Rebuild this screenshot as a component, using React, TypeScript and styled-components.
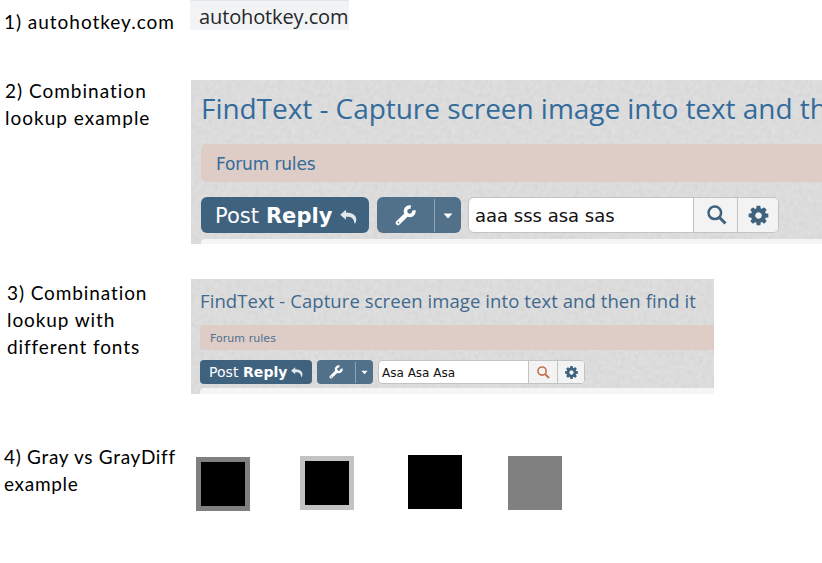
import React from "react";
import styled, { createGlobalStyle, css } from "styled-components";

const GlobalStyle = createGlobalStyle`
  * { box-sizing: border-box; }
  body { margin: 0; background: #fff; overflow: hidden; }
`;

const Page = styled.main`
  width: 822px;
  height: 563px;
  display: grid;
  grid-template-columns: 190px 632px;
  grid-template-rows: 80px 199px 176px 108px;
  overflow: hidden;
  color: #000;
`;

const Label = styled.p<{ $top: number; $left: number; $spacing: number }>`
  margin: ${(p) => p.$top}px 0 0 ${(p) => p.$left}px;
  font: 19px/27px Lato, sans-serif;
  letter-spacing: ${(p) => p.$spacing}px;
  white-space: pre;
`;

const AddressChip = styled.div`
  width: 159px;
  height: 30px;
  padding-left: 9px;
  background: #f1f3f4;
  border-top: 1px solid #e3e5e9;
  color: #26282b;
  font: 20px/32px "Open Sans", sans-serif;
  letter-spacing: -0.12px;
  white-space: nowrap;
  overflow: hidden;
`;

type Size = { $large: boolean };

const paper = `url("data:image/svg+xml,%3Csvg xmlns='http://www.w3.org/2000/svg' width='160' height='160'%3E%3Cfilter id='n'%3E%3CfeTurbulence type='fractalNoise' baseFrequency='0.22' numOctaves='2' stitchTiles='stitch'/%3E%3CfeColorMatrix values='0 0 0 0 0 0 0 0 0 0 0 0 0 0 0 0.07 0 0 0 -0.015'/%3E%3C/filter%3E%3Crect width='160' height='160' filter='url(%23n)'/%3E%3C/svg%3E")`;

const Panel = styled.section<Size>`
  width: ${(p) => (p.$large ? 631 : 523)}px;
  height: ${(p) => (p.$large ? 164 : 115)}px;
  margin-left: 1px;
  padding-left: ${(p) => (p.$large ? 10 : 9)}px;
  display: flex;
  flex-direction: column;
  overflow: hidden;
  background: #e0e0e0 ${paper};
`;

const Title = styled.h2<Size>`
  margin: 0;
  flex: none;
  font-family: "Open Sans", sans-serif;
  font-weight: 400;
  color: #336b9b;
  white-space: nowrap;
  ${(p) =>
    p.$large
      ? css`
          height: 64px;
          font-size: 28px;
          line-height: 56px;
          letter-spacing: -0.05px;
        `
      : css`
          height: 46px;
          font-size: 18.5px;
          line-height: 43px;
          letter-spacing: 0.08px;
          color: #41698d;
        `}
`;

const Rules = styled.div<Size>`
  flex: none;
  height: ${(p) => (p.$large ? 38 : 25)}px;
  padding-left: ${(p) => (p.$large ? 15 : 10)}px;
  border-radius: ${(p) => (p.$large ? "5px 0 0 5px" : "3px 0 0 3px")};
  background: #ddcdc6;
  color: ${(p) => (p.$large ? "#336b9b" : "#50708f")};
  font-family: "DejaVu Sans", sans-serif;
  font-size: ${(p) => (p.$large ? 17 : 11)}px;
  line-height: ${(p) => (p.$large ? 41 : 27)}px;
  letter-spacing: ${(p) => (p.$large ? -0.15 : 0.05)}px;
`;

const ActionBar = styled.div<Size>`
  flex: none;
  display: flex;
  height: ${(p) => (p.$large ? 36 : 24)}px;
  margin-top: ${(p) => (p.$large ? 15 : 10)}px;
`;

const PostButton = styled.button<Size>`
  display: flex;
  align-items: center;
  flex: none;
  border: 0;
  width: ${(p) => (p.$large ? 168 : 112)}px;
  padding: ${(p) => (p.$large ? "2px 0 0 14px" : "0 0 0 9px")};
  border-radius: ${(p) => (p.$large ? 6 : 4)}px;
  background: #3f627f;
  color: #fff;
  font-family: "DejaVu Sans", sans-serif;
  font-size: ${(p) => (p.$large ? 21 : 14)}px;
  letter-spacing: ${(p) => (p.$large ? 0.05 : 0.05)}px;
  white-space: pre;
`;

const ToolsButton = styled.button<Size>`
  display: flex;
  flex: none;
  border: 0;
  padding: 0;
  width: ${(p) => (p.$large ? 84 : 56)}px;
  margin-left: ${(p) => (p.$large ? 8 : 5)}px;
  border-radius: ${(p) => (p.$large ? 6 : 4)}px;
  background: #51708a;
  color: #fff;
`;

const ToolHalf = styled.span`
  flex: 1;
  display: flex;
  align-items: center;
  justify-content: center;
`;

const CaretHalf = styled.span<Size>`
  width: ${(p) => (p.$large ? 27 : 18)}px;
  margin: 2px 0 1px;
  display: flex;
  align-items: center;
  justify-content: center;
  border-left: 1px solid #8fa3b4;
`;

const SearchBox = styled.div<Size>`
  display: flex;
  flex: none;
  width: ${(p) => (p.$large ? 311 : 207)}px;
  margin-left: ${(p) => (p.$large ? 7 : 5)}px;
  border: 1px solid #c3c3c3;
  border-radius: ${(p) => (p.$large ? 6 : 4)}px;
  background: #fff;
  overflow: hidden;
`;

const Query = styled.span<Size>`
  flex: 1;
  padding-left: ${(p) => (p.$large ? 6 : 3)}px;
  color: #111;
  font-family: "DejaVu Sans", sans-serif;
  font-size: ${(p) => (p.$large ? 18 : 12)}px;
  line-height: ${(p) => (p.$large ? 35 : 24)}px;
  white-space: nowrap;
`;

const IconCell = styled.span<{ $width: number; $color: string }>`
  width: ${(p) => p.$width}px;
  display: flex;
  align-items: center;
  justify-content: center;
  border-left: 1px solid #c3c3c3;
  background: #f3f3f3;
  color: ${(p) => p.$color};
`;

const PostBody = styled.div<Size>`
  flex: 1;
  margin-top: ${(p) => (p.$large ? 6 : 4)}px;
  border-top-left-radius: 4px;
  background: #f5f5f5;
`;

const Glyph = styled.svg<{ $left?: number; $faded?: boolean }>`
  flex: none;
  display: block;
  fill: currentColor;
  margin-left: ${(p) => p.$left ?? 0}px;
  opacity: ${(p) => (p.$faded ? 0.85 : 1)};
`;

const Swatches = styled.div`
  display: flex;
  align-items: flex-start;
  padding-left: 6px;
`;

const Swatch = styled.div<{ $fill: string; $edge: string; $top: number; $gap: number }>`
  width: 54px;
  height: 54px;
  margin: ${(p) => p.$top}px ${(p) => p.$gap}px 0 0;
  border: 5px solid ${(p) => p.$edge};
  background: ${(p) => p.$fill};
`;

const cogPath =
  "M1152 896q0-106-75-181t-181-75-181 75-75 181 75 181 181 75 181-75 75-181zm512-109v222q0 12-8 23t-20 13l-185 28q-19 54-39 91 35 50 107 138 10 12 10 25t-9 23q-27 37-99 108t-94 71q-12 0-26-9l-138-108q-44 23-91 38-16 136-29 186-7 28-36 28h-222q-14 0-24.500-8.500t-11.500-21.500l-28-184q-49-16-90-37l-141 107q-10 9-25 9-14 0-25-11-126-114-165-168-7-10-7-23 0-12 8-23 15-21 51-66.500t54-70.500q-27-50-41-99l-183-27q-13-2-21-12.500t-8-23.500v-222q0-12 8-23t19-13l186-28q14-46 39-92-40-57-107-138-10-12-10-24 0-10 9-23 26-36 98.500-107.500t94.500-71.500q13 0 26 10l138 107q44-23 91-38 16-136 29-186 7-28 36-28h222q14 0 24.500 8.500t11.500 21.500l28 184q49 16 90 37l142-107q9-9 24-9 13 0 25 10 129 119 165 170 7 8 7 22 0 12-8 23-15 21-51 66.500t-54 70.500q26 50 41 98l183 28q13 2 21 12.500t8 23.500z";

const icons = {
  reply: {
    box: "0 0 16 16",
    shape: <path d="M5.600 1.600 L0.200 6.300 L5.600 11 V8.300 C10.500 8 13 9.500 13.600 14.600 H14.200 C16.400 11 16.300 4.800 5.600 4.300 Z" />,
  },
  wrench: {
    box: "0 0 20 20",
    shape: (
      <>
        <path d="M2.900 17.100 L10.800 9.200" fill="none" stroke="currentColor" strokeWidth="4.400" strokeLinecap="round" />
        <path d="M15 2.100 A4 4 0 1 0 17.900 5.200" fill="none" stroke="currentColor" strokeWidth="3.400" />
        <circle cx="3.300" cy="16.700" r="0.800" fill="#51708a" />
      </>
    ),
  },
  search: {
    box: "0 0 20 20",
    shape: (
      <g fill="none" stroke="currentColor">
        <circle cx="7.800" cy="7.800" r="6.300" strokeWidth="2.500" />
        <path d="M12.500 12.500 L18.500 18.500" strokeWidth="3.100" />
      </g>
    ),
  },
  cog: { box: "0 0 1792 1792", shape: <path d={cogPath} /> },
  caret: { box: "0 0 16 16", shape: <path d="M3.500 5.600 H12.500 L8 10.600 Z" /> },
};

type IconProps = { name: keyof typeof icons; size: number; left?: number; faded?: boolean };

function Icon({ name, size, left, faded }: IconProps) {
  return (
    <Glyph viewBox={icons[name].box} width={size} height={size} $left={left} $faded={faded} aria-hidden>
      {icons[name].shape}
    </Glyph>
  );
}

type ForumPanelProps = { large: boolean; title: string; query: string; searchColor: string };

function ForumPanel({ large, title, query, searchColor }: ForumPanelProps) {
  return (
    <Panel $large={large}>
      <Title $large={large}>{title}</Title>
      <Rules $large={large}>Forum rules</Rules>
      <ActionBar $large={large}>
        <PostButton $large={large}>
          Post <b>Reply</b>
          <Icon name="reply" size={large ? 17 : 12} left={large ? 8 : 4} faded />
        </PostButton>
        <ToolsButton $large={large}>
          <ToolHalf>
            <Icon name="wrench" size={large ? 21 : 14} />
          </ToolHalf>
          <CaretHalf $large={large}>
            <Icon name="caret" size={large ? 16 : 11} />
          </CaretHalf>
        </ToolsButton>
        <SearchBox $large={large}>
          <Query $large={large}>{query}</Query>
          <IconCell $width={large ? 44 : 29} $color={searchColor}>
            <Icon name="search" size={large ? 20 : 13} left={large ? 3 : 1} />
          </IconCell>
          <IconCell $width={large ? 41 : 27} $color="#3f627f">
            <Icon name="cog" size={large ? 23 : 15} />
          </IconCell>
        </SearchBox>
      </ActionBar>
      <PostBody $large={large} />
    </Panel>
  );
}

const threadTitle = "FindText - Capture screen image into text and then find it";

export default function App() {
  return (
    <>
      <GlobalStyle />
      <Page>
        <Label $top={8} $left={4} $spacing={0.97}>1) autohotkey.com</Label>
        <AddressChip>autohotkey.com</AddressChip>

        <Label $top={-3} $left={5} $spacing={1}>{"2) Combination\nlookup example"}</Label>
        <ForumPanel large title={threadTitle} query="aaa sss asa sas" searchColor="#3f627f" />

        <Label $top={0} $left={7} $spacing={0.9}>{"3) Combination\nlookup with\ndifferent fonts"}</Label>
        <ForumPanel large={false} title={threadTitle} query="Asa Asa Asa" searchColor="#c46f50" />

        <Label $top={-12} $left={4} $spacing={0.7}>{"4) Gray vs GrayDiff\nexample"}</Label>
        <Swatches>
          <Swatch $fill="#000" $edge="#808080" $top={2} $gap={50} />
          <Swatch $fill="#000" $edge="#c3c3c3" $top={1} $gap={54} />
          <Swatch $fill="#000" $edge="#000" $top={0} $gap={46} />
          <Swatch $fill="#808080" $edge="#808080" $top={1} $gap={0} />
        </Swatches>
      </Page>
    </>
  );
}
